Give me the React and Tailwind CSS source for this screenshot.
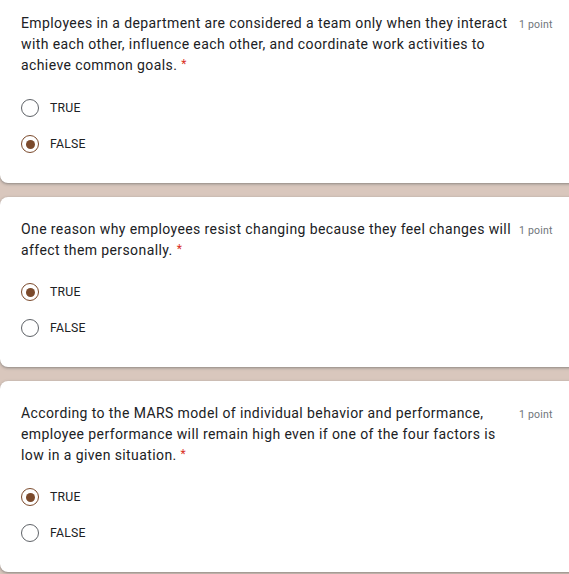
import React from "react";

const questions = [
  {
    text: "Employees in a department are considered a team only when they interact with each other, influence each other, and coordinate work activities to achieve common goals.",
    selected: "FALSE",
    first: true,
  },
  {
    text: "One reason why employees resist changing because they feel changes will affect them personally.",
    selected: "TRUE",
  },
  {
    text: "According to the MARS model of individual behavior and performance, employee performance will remain high even if one of the four factors is low in a given situation.",
    selected: "TRUE",
  },
];

function Radio({ checked }) {
  return (
    <span
      className={
        "flex h-[18px] w-[18px] shrink-0 items-center justify-center rounded-full border-[1.75px] " +
        (checked ? "border-[#7b4a2c]" : "border-[#5f6368]")
      }
    >
      {checked && <span className="h-[9px] w-[9px] rounded-full bg-[#7b4a2c]" />}
    </span>
  );
}

function Card({ q }) {
  return (
    <div
      className={
        "w-[590px] rounded-lg bg-white pl-[21px] pb-[21px] shadow-[0_1px_2px_0_rgba(60,64,67,0.3),0_1px_3px_1px_rgba(60,64,67,0.15)] " +
        (q.first ? "pt-[13px] rounded-t-none" : "pt-[22px]")
      }
    >
      <div className="flex items-start">
        <div className="w-[492px] text-[14px] leading-[21px] tracking-[0.4px] text-[#202124] [font-family:Roboto,'Liberation_Sans',sans-serif]">
          {q.text}
          <span className="ml-[4px] align-top text-[12px] leading-[18px] text-[#d93025]">*</span>
        </div>
        <div className="ml-[6px] pt-[1px] text-[10.5px] leading-[21px] tracking-[0.2px] text-[#70757a] [font-family:Roboto,'Liberation_Sans',sans-serif]">
          1 point
        </div>
      </div>
      <div className={"flex flex-col " + (q.first ? "mt-[14px]" : "mt-[13px]")}>
        {["TRUE", "FALSE"].map((opt) => (
          <div key={opt} className="flex h-[36px] items-center gap-[11px]">
            <Radio checked={q.selected === opt} />
            <span className="text-[12.25px] tracking-[0.2px] text-[#202124] [font-family:Roboto,'Liberation_Sans',sans-serif]">
              {opt}
            </span>
          </div>
        ))}
      </div>
    </div>
  );
}

export default function App() {
  return (
    <div className="h-[574px] w-[569px] overflow-hidden bg-[#d9c7bd]">
      <div className="flex flex-col gap-[14px]">
        {questions.map((q, i) => (
          <Card key={i} q={q} />
        ))}
      </div>
    </div>
  );
}
